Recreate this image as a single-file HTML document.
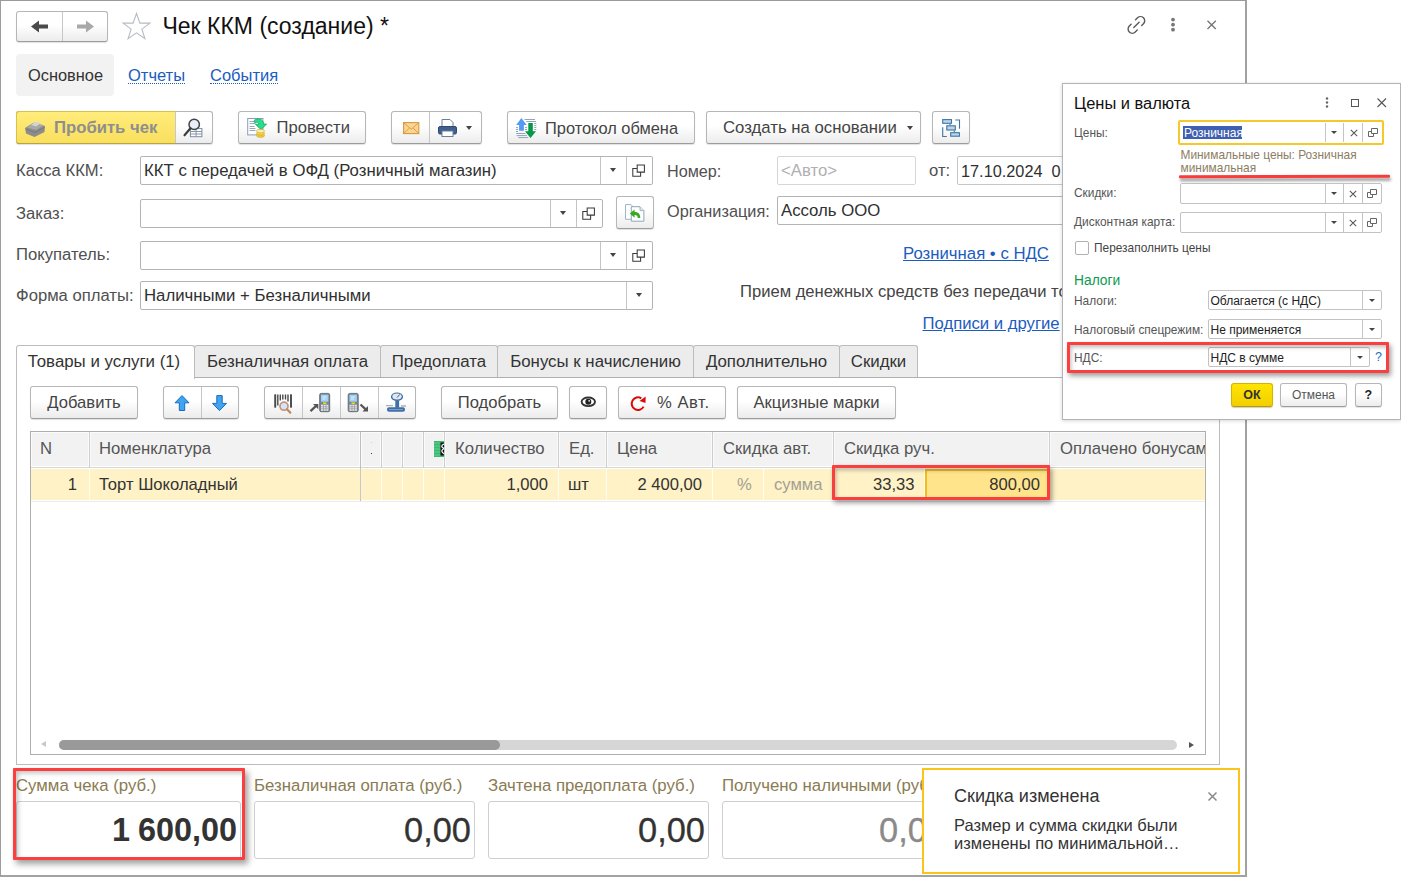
<!DOCTYPE html>
<html lang="ru"><head><meta charset="utf-8"><title>Чек ККМ (создание)</title>
<style>
*{box-sizing:border-box;margin:0;padding:0}
html,body{width:1401px;height:877px;overflow:hidden;background:#fff}
body{position:relative;font-family:"Liberation Sans",sans-serif;font-size:16.6px;color:#333;line-height:1}
.a{position:absolute;white-space:nowrap}
.win{left:0;top:0;width:1247px;height:877px;border-top:1px solid #9a9a9a;border-left:1px solid #9c9c9c;border-right:2px solid #a2a2a2;border-bottom:2px solid #a2a2a2}
.btn{border:1px solid #b6b6b6;border-bottom-color:#9c9c9c;border-radius:3px;background:linear-gradient(#fff,#fff 45%,#ececec);box-shadow:0 1px 1px rgba(0,0,0,.12);color:#444;text-align:center}
.btn .t{position:absolute;top:8px;left:0;right:0;text-align:center}
.sep{position:absolute;top:0;bottom:0;width:1px;background:#c6c6c6}
.lbl{color:#505050;font-size:16.65px}
.inp{border:1px solid #b4b4b4;border-radius:2px;background:#fff;height:29px}
.inp .v{position:absolute;left:3px;top:6px;color:#303030;font-size:16.75px}
.dd{position:absolute;top:0;bottom:0;width:1px;background:#c4c4c4}
.link{color:#1c5cbf;text-decoration:underline}
.tri{position:absolute;width:0;height:0;border-left:3.2px solid transparent;border-right:3.2px solid transparent;border-top:4px solid #444}
.tab{top:345px;height:32px;border:1px solid #bcbcbc;border-bottom:none;background:#ececec;border-radius:3px 3px 0 0;color:#333}
.tab span{position:absolute;top:8px;left:0;right:0;text-align:center;font-size:16.85px}
.th{position:absolute;top:0;height:35px;background:#f2f2f2;border-right:1px solid #cdcdcd;color:#555;box-shadow:inset 1px 0 0 #fbfbfb,inset -1px 0 0 #fbfbfb,inset 0 1px 0 #fbfbfb,inset 0 -1px 0 #fff;overflow:hidden}
.th span{position:absolute;left:10px;top:9.3px;font-size:16.7px}
.td{position:absolute;top:37px;height:31px;background:#fff2c6;border-right:1px solid #fffcf0;color:#333}
.td span{position:absolute;top:8px}
.tot{border:1px solid #cfcfcf;border-radius:3px;background:#fff;height:58px;top:801px;width:221px}
.tot span{position:absolute;right:3px;top:10.5px;font-size:34.4px;color:#333;-webkit-text-stroke:.3px #333}
.tl{top:778px;color:#8a7b52;font-size:16.8px}
.d{font-size:11.9px;color:#555}
.tri.s{border-left-width:3px;border-right-width:3px;border-top-width:3.5px}
.dinp{border:1px solid #c2c2c2;border-radius:2px;background:#fff;height:21px}
</style></head><body>
<div class="a win"></div>

<!-- nav -->
<div class="a btn" style="left:16px;top:11px;width:92px;height:31px"><div class="sep" style="left:45px"></div>
<svg class="a" style="left:0;top:0" width="92" height="30"><path d="M14 14.5 l8 -6 v4 h9 v4 h-9 v4z" fill="#4a4a4a"/><path d="M77 14.5 l-8 -6 v4 h-9 v4 h9 v4z" fill="#a8a8a8"/></svg></div>
<svg class="a" style="left:121px;top:11px" width="32" height="30"><path d="M15.5 2.5 l3.4 9.6 h10 l-8 6 3 9.6 -8.4 -5.9 -8.4 5.9 3 -9.6 -8 -6 h10z" fill="#fff" stroke="#b4bcc4" stroke-width="1.1"/></svg>
<div class="a" style="left:162.5px;top:14.5px;font-size:23px;color:#111">Чек ККМ (создание) *</div>
<!-- top right icons -->
<svg class="a" style="left:0;top:0" width="1247" height="50"><g transform="translate(1136.4 24.9) rotate(-45)" fill="none" stroke="#5a5a5a" stroke-width="1.4" stroke-linecap="round"><path d="M3 -4.2 H5.8 A4.2 4.2 0 0 1 5.8 4.2 H3.3"/><path d="M-3 4.2 H-5.8 A4.2 4.2 0 0 1 -5.8 -4.2 H-3.3"/><path d="M-3.7 0 H3.8"/></g></svg>
<svg class="a" style="left:1168px;top:15px" width="10" height="20"><circle cx="5" cy="4.6" r="1.9" fill="#777"/><circle cx="5" cy="9.7" r="1.9" fill="#777"/><circle cx="5" cy="14.7" r="1.9" fill="#777"/></svg>
<svg class="a" style="left:1206px;top:19px" width="12" height="12"><path d="M1.5 1.8 L9.8 10 M9.8 1.8 L1.5 10" stroke="#777" stroke-width="1.4"/></svg>

<!-- sections -->
<div class="a" style="left:16px;top:54px;width:98px;height:42px;background:#f2f2f2;border-radius:4px"></div>
<div class="a" style="left:28px;top:67px;font-size:16.4px;color:#333">Основное</div>
<div class="a" style="left:128px;top:67px;font-size:16.5px;color:#1c5cbf;height:17px;border-bottom:1px dotted #1c5cbf">Отчеты</div>
<div class="a" style="left:210px;top:67px;font-size:16.5px;color:#1c5cbf;height:17px;border-bottom:1px dotted #1c5cbf">События</div>

<!-- toolbar 1 -->
<div class="a btn" style="left:16px;top:111px;width:197px;height:33px;">
 <div class="a" style="left:-1px;top:-1px;width:160px;height:33px;background:linear-gradient(#ffec7a,#f9df5e);border:1px solid #d8c24a;border-bottom-color:#b9a540;border-right:none;border-radius:3px 0 0 3px"></div>
 <div class="sep" style="left:158px;background:#c8c8c8"></div>
 <svg class="a" style="left:0;top:0" width="36" height="31"><path d="M8 16 L16 11 L28 14 L27.5 20 L17.5 25 L9 21.5 Z" fill="#8c8c8c"/><path d="M10 15.5 L17.5 10.5 L27 13.2 L19 18 Z" fill="#a9a9a9"/><path d="M14 12.8 L18.5 9.8 L23.5 11.2 L19 14.4 Z" fill="#d4d4d4"/><path d="M9 17 L18 20.5 L27.5 15.5" fill="none" stroke="#7a7a7a" stroke-width="1"/></svg>
 <div class="a" style="left:37px;top:8px;font-weight:bold;color:#8e8e8e;font-size:16.7px">Пробить чек</div>
 <svg class="a" style="left:158px;top:0" width="40" height="31"><rect x="15.4" y="16.6" width="11.5" height="8.1" fill="#fff" stroke="#7d8da0" stroke-width="1"/><path d="M15.4 19.5 h11.5 M15.4 22 h11.5 M21.1 16.6 v8.1" stroke="#7d8da0" stroke-width=".9"/><circle cx="19.2" cy="12.4" r="5.2" fill="#e4ecf8" fill-opacity=".85" stroke="#444" stroke-width="1.5"/><path d="M15.5 16.3 L9.5 23.3" stroke="#3a3a3a" stroke-width="2.1" stroke-linecap="round"/></svg>
</div>
<div class="a btn" style="left:238px;top:111px;width:128px;height:33px">
 <svg class="a" style="left:0;top:0" width="40" height="31"><rect x="8.7" y="6.5" width="15.2" height="16.4" fill="#fff" stroke="#8a9db8"/><path d="M10.5 9.5h5M10.5 11.5h6M10.5 14.5h5M10.5 16.5h6M10.5 18.5h6" stroke="#9aa9bc" stroke-width="1"/><path d="M15.3 8.2 C18.5 5.8 24.3 6.5 24.6 12 L27.6 12 L22 17.7 L16.4 12.3 L20 12.3 C20 10.5 18 9.8 15.3 10.6 Z" fill="#25df8c" stroke="#17a862" stroke-width=".8"/><ellipse cx="21.5" cy="23.5" rx="4" ry="1.9" fill="#f0cf3a" stroke="#c9a020" stroke-width=".6"/><ellipse cx="21.5" cy="21.3" rx="4" ry="1.9" fill="#f5d94e" stroke="#c9a020" stroke-width=".6"/><ellipse cx="21.5" cy="19.1" rx="4" ry="1.9" fill="#fbeeb0" stroke="#c9a020" stroke-width=".6"/></svg>
 <div class="a" style="left:37.5px;top:8px">Провести</div>
</div>
<div class="a btn" style="left:391px;top:111px;width:91px;height:33px"><div class="sep" style="left:37px"></div>
 <svg class="a" style="left:10.5px;top:10px" width="18" height="14"><rect x=".6" y=".6" width="15.2" height="11" fill="#fad594" stroke="#d9983a" stroke-width="1.1"/><path d="M1 1 l7.2 6.2 7.2 -6.2 M1 11.2 l5.5 -5.2 M15.4 11.2 l-5.5 -5.2" fill="none" stroke="#d9983a" stroke-width=".9"/></svg>
 <svg class="a" style="left:45px;top:6px" width="22" height="20"><path d="M5 1.5 h8 l3 3 v5 h-11z" fill="#fff" stroke="#6a7f9a"/><rect x="1.5" y="8.5" width="18" height="7.5" rx="1.5" fill="#3f5f8c" stroke="#2f4a70"/><rect x="5" y="13" width="11" height="5.5" fill="#fff" stroke="#6a7f9a"/></svg>
 <div class="tri" style="left:74px;top:14px"></div>
</div>
<div class="a btn" style="left:507px;top:111px;width:188px;height:33px">
 <svg class="a" style="left:0;top:0" width="40" height="31"><path d="M16.5 7.5H27M18.3 9.5H28M8.2 21.5H17.3M8.6 23.6H18.9M10.2 25.6H20.3M8 15.6h2M8 17.5h2M8 19.5h2M17 15.6h2M17 17.5h2M26.3 11.5h2M26.3 13.5h2M26.3 15.5h2M26.3 17.5h2" stroke="#93a4b6" stroke-width="1"/><path d="M13.4 6 L18.7 13.1 H15.9 V18.8 H11.1 V13.1 H8.2 Z" fill="#5599f5"/><path d="M20.3 11 H24.8 V19.3 H28 L22.5 26.1 L17 19.3 H20.3 Z" fill="#049848"/></svg>
 <div class="a" style="left:37px;top:8px;font-size:16.4px">Протокол обмена</div>
</div>
<div class="a btn" style="left:706px;top:111px;width:215px;height:33px">
 <div class="a" style="left:16px;top:8px;font-size:16.75px">Создать на основании</div><div class="tri" style="left:200px;top:14px"></div>
</div>
<div class="a btn" style="left:932px;top:111px;width:38px;height:33px">
 <svg class="a" style="left:0;top:0" width="36" height="31"><g fill="#bcd3e8" stroke="#3d76a6" stroke-width="1.1"><rect x="9.7" y="7.6" width="8.8" height="3.7"/><rect x="13.8" y="13.8" width="8.5" height="4.2"/><rect x="17.7" y="20.7" width="8.7" height="3.5"/></g><path d="M22.3 8 H26.5 V16.7 M9.7 15.3 V24.5 H13.8 M17 11.7 V13.3 M21.3 18.5 V20.2" fill="none" stroke="#3d76a6" stroke-width="1.1"/></svg>
</div>

<!-- form left -->
<div class="a lbl" style="left:16px;top:163px">Касса ККМ:</div>
<div class="a inp" style="left:140px;top:156px;width:513px"><div class="v">ККТ с передачей в ОФД (Розничный магазин)</div><div class="dd" style="left:459px"></div><div class="dd" style="left:485px"></div><div class="tri" style="left:468.5px;top:10.8px"></div>
<svg class="a" style="left:490px;top:5px" width="16" height="16"><path d="M6.2 2.9 h7.2 v7.2 h-7.2z M6.2 6.5 h-4.4 v7.8 h7.8 v-4.2" fill="none" stroke="#3a3a3a" stroke-width="1.05"/></svg></div>

<div class="a lbl" style="left:16px;top:206px">Заказ:</div>
<div class="a inp" style="left:140px;top:199px;width:463px"><div class="dd" style="left:409px"></div><div class="dd" style="left:435px"></div><div class="tri" style="left:418.5px;top:10.8px"></div>
<svg class="a" style="left:440px;top:5px" width="16" height="16"><path d="M6.2 2.9 h7.2 v7.2 h-7.2z M6.2 6.5 h-4.4 v7.8 h7.8 v-4.2" fill="none" stroke="#3a3a3a" stroke-width="1.05"/></svg></div>
<div class="a btn" style="left:616px;top:196px;width:38px;height:33px">
 <svg class="a" style="left:0;top:0" width="36" height="31"><path d="M8.5 7.6 h5.5 l2.7 2.7 v12 h-8.2z" fill="#fff" stroke="#9fb4c4" stroke-width="1"/><path d="M14.3 9.7 h8.7 l3.9 3.9 v10.6 h-12.6z" fill="#fff" stroke="#8fa6b8" stroke-width="1"/><path d="M23 9.7 v3.9 h3.9" fill="#dfe8ee" stroke="#8fa6b8" stroke-width=".8"/><path d="M12.8 16.5 L17.6 12.4 V15 C21 14.8 23.3 16.8 23.3 21 H20.8 C20.8 18.6 19.6 17.8 17.6 17.9 V20.8 Z" fill="#3aa820"/></svg>
</div>

<div class="a lbl" style="left:16px;top:247px">Покупатель:</div>
<div class="a inp" style="left:140px;top:241px;width:513px;height:28.5px"><div class="dd" style="left:459px"></div><div class="dd" style="left:485px"></div><div class="tri" style="left:468.5px;top:10.8px"></div>
<svg class="a" style="left:490px;top:5px" width="16" height="16"><path d="M6.2 2.9 h7.2 v7.2 h-7.2z M6.2 6.5 h-4.4 v7.8 h7.8 v-4.2" fill="none" stroke="#3a3a3a" stroke-width="1.05"/></svg></div>

<div class="a lbl" style="left:16px;top:288px">Форма оплаты:</div>
<div class="a inp" style="left:140px;top:281px;width:513px"><div class="v">Наличными + Безналичными</div><div class="dd" style="left:485px"></div><div class="tri" style="left:494.5px;top:10.8px"></div></div>

<!-- form right -->
<div class="a lbl" style="left:667px;top:163px;font-size:16.2px">Номер:</div>
<div class="a inp" style="left:777px;top:156px;width:139px;border-color:#d6d6d6"><div class="v" style="color:#b0b0b0">&lt;Авто&gt;</div></div>
<div class="a lbl" style="left:929px;top:163px">от:</div>
<div class="a inp" style="left:957px;top:156px;width:200px;border-color:#c6c6c6"><div class="v" style="font-size:16.3px">17.10.2024&nbsp; 0</div></div>
<div class="a lbl" style="left:667px;top:203px;font-size:16.3px">Организация:</div>
<div class="a inp" style="left:777px;top:196px;width:400px;height:29px"><div class="v">Ассоль ООО</div></div>
<div class="a link" style="left:903px;top:246.4px;font-size:16.76px">Розничная • с НДС</div>
<div class="a" style="left:740px;top:284.4px;color:#444">Прием денежных средств без передачи то</div>
<div class="a link" style="left:922.5px;top:316.4px;font-size:16.7px">Подписи и другие</div>

<!-- tabs -->
<div class="a" style="left:16px;top:377px;width:1204px;height:388px;border:1px solid #bcbcbc;border-top-color:#b0b0b0"></div>
<div class="a tab" style="left:16px;width:179px;background:#fff;height:34px;border-radius:3px 3px 0 0"><span style="left:-3px">Товары и услуги (1)</span></div>
<div class="a tab" style="left:194px;width:187px"><span>Безналичная оплата</span></div>
<div class="a tab" style="left:380px;width:118px"><span>Предоплата</span></div>
<div class="a tab" style="left:497px;width:197px"><span>Бонусы к начислению</span></div>
<div class="a tab" style="left:693px;width:147px"><span>Дополнительно</span></div>
<div class="a tab" style="left:839px;width:79px"><span>Скидки</span></div>

<!-- toolbar 2 -->
<div class="a btn" style="left:30px;top:386px;width:108px;height:33px"><div class="t">Добавить</div></div>
<div class="a btn" style="left:163px;top:386px;width:76px;height:33px"><div class="sep" style="left:37px"></div>
 <svg class="a" style="left:0;top:0" width="38" height="31"><path d="M18 8.6 L25 15.8 H20.7 V23.5 H15.3 V15.8 H11 Z" fill="#40a4f1" stroke="#1a6cc0" stroke-width="1" stroke-linejoin="round"/></svg>
 <svg class="a" style="left:38px;top:0" width="38" height="31"><path d="M17.5 23.6 L24.5 16.4 H20.2 V8.6 H14.8 V16.4 H10.5 Z" fill="#40a4f1" stroke="#1a6cc0" stroke-width="1" stroke-linejoin="round"/></svg>
</div>
<div class="a btn" style="left:264px;top:386px;width:152px;height:33px"><div class="sep" style="left:37px"></div><div class="sep" style="left:75px"></div><div class="sep" style="left:113px"></div>
 <svg class="a" style="left:0;top:0" width="38" height="31"><path d="M10.3 7.5v13M12.8 7.5v11M15.3 7.5v6M17.8 7.5v5M20.5 7.5v5M23 7.5v7M26 7.5v13" stroke="#4a4a4a" stroke-width="1.4"/><path d="M10.3 7.5v13M26 7.5v13" stroke="#4a4a4a" stroke-width="1.8"/><circle cx="19" cy="19.2" r="4" fill="#d3e4fb" stroke="#c4937a" stroke-width="1.7"/><path d="M22 22.3 L25.3 25.6" stroke="#c08a5a" stroke-width="2.2" stroke-linecap="round"/></svg>
 <svg class="a" style="left:38px;top:0" width="38" height="31"><rect x="16.7" y="6.4" width="10" height="18.3" rx="1.5" fill="#7d8791" stroke="#5f6973" stroke-width=".9"/><rect x="18" y="7.7" width="7.4" height="7" fill="#9fd2f8"/><path d="M19.5 10 h4 M19.5 12 h3" stroke="#e8f4fe" stroke-width=".9"/><rect x="20" y="15.4" width="3.4" height="1.7" fill="#f3d416"/><rect x="18" y="17.8" width="7.4" height="6" fill="#e9e9e9"/><path d="M18 19.8 h7.4 M18 21.8 h7.4 M20.5 17.8 v6 M23 17.8 v6" stroke="#8a929a" stroke-width=".7"/><path d="M7.5 24.2 L14 18" stroke="#555" stroke-width="2.3"/><path d="M10 17 H15.3 V22.3 Z" fill="#555"/></svg>
 <svg class="a" style="left:76px;top:0" width="38" height="31"><rect x="7.2" y="6.4" width="10" height="18.3" rx="1.5" fill="#7d8791" stroke="#5f6973" stroke-width=".9"/><rect x="8.5" y="7.7" width="7.4" height="7" fill="#9fd2f8"/><path d="M10 10 h4 M10 12 h3" stroke="#e8f4fe" stroke-width=".9"/><rect x="10.5" y="15.4" width="3.4" height="1.7" fill="#f3d416"/><rect x="8.5" y="17.8" width="7.4" height="6" fill="#e9e9e9"/><path d="M8.5 19.8 h7.4 M8.5 21.8 h7.4 M11 17.8 v6 M13.5 17.8 v6" stroke="#8a929a" stroke-width=".7"/><path d="M19.5 17.5 L25.5 23.2" stroke="#555" stroke-width="2.3"/><path d="M27 19 V24.6 H21.4 Z" fill="#555"/></svg>
 <svg class="a" style="left:114px;top:0" width="38" height="31"><path d="M7 18.6 h7 M22 19 h5" stroke="#aab0b6" stroke-width="1.3"/><ellipse cx="18" cy="9.8" rx="6.1" ry="4.3" fill="#3f6fa5"/><ellipse cx="18" cy="9.6" rx="4.7" ry="3" fill="#dfe9f4"/><path d="M18 10.5 L20.8 7.4" stroke="#444" stroke-width=".9"/><rect x="16.3" y="13.8" width="3.8" height="7" fill="#3f6fa5"/><rect x="8" y="20.3" width="18" height="4.4" rx="2" fill="#3f6fa5"/><path d="M10 22.6 h14" stroke="#7fa3cc" stroke-width="1"/></svg>
</div>
<div class="a btn" style="left:441px;top:386px;width:117px;height:33px"><div class="t">Подобрать</div></div>
<div class="a btn" style="left:569px;top:386px;width:38px;height:33px">
 <svg class="a" style="left:0;top:0" width="36" height="31"><ellipse cx="18.3" cy="14.8" rx="6.7" ry="4.3" fill="#fff" stroke="#333" stroke-width="1.9"/><circle cx="18.3" cy="14.8" r="3" fill="#222"/><circle cx="19.2" cy="13.8" r=".9" fill="#eee"/></svg>
</div>
<div class="a btn" style="left:618px;top:386px;width:108px;height:33px">
 <svg class="a" style="left:0;top:0" width="38" height="31"><path d="M24.6 19.6 A6.3 6.3 0 1 1 22.3 11.3" fill="none" stroke="#dc0a0a" stroke-width="2"/><path d="M26.7 9.4 L26.5 15.9 L20.5 14.1 Z" fill="#dc0a0a"/></svg>
 <div class="a" style="left:38px;top:8px;letter-spacing:.55px">% Авт.</div>
</div>
<div class="a btn" style="left:737px;top:386px;width:159px;height:33px"><div class="t">Акцизные марки</div></div>

<!-- table -->
<div class="a" style="left:30px;top:431px;width:1176px;height:324px;border:1px solid #aeaeae;background:#fff;overflow:hidden">
 <div class="th" style="left:0;width:59px"><span style="left:9px">N</span></div>
 <div class="th" style="left:59px;width:271px"><span style="left:9px">Номенклатура</span></div>
 <div class="th" style="left:330px;width:21px"><div class="a" style="left:10px;top:21px;width:1px;height:1px;background:#333"></div><div class="a" style="left:10px;top:10px;width:1px;height:1px;background:#ccc"></div></div>
 <div class="th" style="left:351px;width:21px"></div>
 <div class="th" style="left:372px;width:21px"></div>
 <div class="th" style="left:393px;width:21px"><svg class="a" style="left:10px;top:9px" width="11" height="16"><rect x="0" y="0" width="11" height="16" fill="#3cb870"/><path d="M0 2h6M0 5h6M0 8h6M0 11h6M0 14h6" stroke="#5fcf8e" stroke-width="1"/><rect x="6.5" y="1.5" width="4.5" height="13" fill="#111"/><path d="M10.5 3 C7 4 7 6 10 7.5 C7 9 7 11 10.5 13" fill="none" stroke="#fff" stroke-width="1.3"/></svg></div>
 <div class="th" style="left:414px;width:114px"><span>Количество</span></div>
 <div class="th" style="left:528px;width:48px"><span>Ед.</span></div>
 <div class="th" style="left:576px;width:106px"><span>Цена</span></div>
 <div class="th" style="left:682px;width:121px"><span>Скидка авт.</span></div>
 <div class="th" style="left:803px;width:216px"><span>Скидка руч.</span></div>
 <div class="th" style="left:1019px;width:160px;border-right:none"><span>Оплачено бонусам</span></div>
 <div class="a" style="left:0;top:35px;width:1176px;height:1px;background:#d6d6d6"></div>
 <div class="a" style="left:329px;top:0;width:1px;height:70px;background:#bfbfbf"></div>

 <div class="td" style="left:0;width:59px"><span style="right:12px">1</span></div>
 <div class="td" style="left:59px;width:271px;border-right-color:#c8c8c8"><span style="left:9px">Торт Шоколадный</span></div>
 <div class="td" style="left:330px;width:21px"></div>
 <div class="td" style="left:351px;width:21px"></div>
 <div class="td" style="left:372px;width:21px"></div>
 <div class="td" style="left:393px;width:21px"></div>
 <div class="td" style="left:414px;width:114px"><span style="right:10px">1,000</span></div>
 <div class="td" style="left:528px;width:48px"><span style="left:9px">шт</span></div>
 <div class="td" style="left:576px;width:106px"><span style="right:10px">2 400,00</span></div>
 <div class="td" style="left:682px;width:51px"><span style="left:24px;color:#a39f94">%</span></div>
 <div class="td" style="left:733px;width:70px"><span style="left:10px;color:#a39f94">сумма</span></div>
 <div class="td" style="left:803px;width:91px"><span style="right:9.5px">33,33</span></div>
 <div class="td" style="left:894px;width:125px;background:#ffe48c;border:2px solid #efbb1f"><span style="right:8px;top:6px">800,00</span></div>
 <div class="td" style="left:1019px;width:160px;border-right:none"></div>
 <div class="a" style="left:0;top:69px;width:1176px;height:1px;background:#ececec"></div>

 <!-- scrollbar -->
 <div class="a" style="left:28px;top:308px;width:1118px;height:10px;border-radius:5px;background:#d6d6d6"></div>
 <div class="a" style="left:28px;top:308px;width:441px;height:10px;border-radius:5px;background:#999"></div>
 <div class="a" style="left:10px;top:309px;width:0;height:0;border-top:3.5px solid transparent;border-bottom:3.5px solid transparent;border-right:5px solid #c8c8c8"></div>
 <div class="a" style="left:1157.5px;top:310px;width:0;height:0;border-top:3.2px solid transparent;border-bottom:3.2px solid transparent;border-left:5px solid #555"></div>
</div>
<!-- red highlight on discount -->
<div class="a" style="left:832px;top:465px;width:218px;height:35px;border:3px solid #fb3e3e;border-radius:1px;box-shadow:2px 3px 5px rgba(0,0,0,.38),inset 2px 3px 4px -1px rgba(0,0,0,.28)"></div>

<!-- totals -->
<div class="a tl" style="left:16px">Сумма чека (руб.)</div>
<div class="a tot" style="left:16px;width:225px"><span style="font-weight:bold;font-size:32.4px;word-spacing:-1px;top:12px;-webkit-text-stroke:0">1 600,00</span></div>
<div class="a tl" style="left:254px">Безналичная оплата (руб.)</div>
<div class="a tot" style="left:254px"><span>0,00</span></div>
<div class="a tl" style="left:488px">Зачтена предоплата (руб.)</div>
<div class="a tot" style="left:488px"><span>0,00</span></div>
<div class="a tl" style="left:722px">Получено наличными (руб.)</div>
<div class="a tot" style="left:722px;width:228px"><span style="color:#8a8a8a;-webkit-text-stroke:.3px #8a8a8a">0,00</span></div>
<div class="a" style="left:13px;top:768px;width:232px;height:92px;border:3px solid #fb3e3e;border-radius:1px;box-shadow:3px 4px 6px rgba(0,0,0,.38),inset 3px 3px 5px -1px rgba(0,0,0,.25)"></div>

<!-- notification -->
<div class="a" style="left:922px;top:768px;width:318px;height:106px;border:2px solid #fbc41a;background:#fff">
 <div class="a" style="left:30px;top:17.2px;font-size:18.05px;color:#333">Скидка изменена</div>
 <svg class="a" style="left:283px;top:21px" width="12" height="12"><path d="M1.5 1.5 L9.5 9.5 M9.5 1.5 L1.5 9.5" stroke="#888" stroke-width="1.5"/></svg>
 <div class="a" style="left:30px;top:46px;font-size:16.5px;color:#333;line-height:18px;white-space:normal;width:260px">Размер и сумма скидки были<br>изменены по минимальной…</div>
</div>

<!-- dialog -->
<div class="a" style="left:1062px;top:83px;width:339px;height:337px;border:1px solid #b4b4b4;background:#fff;box-shadow:0 1px 4px rgba(0,0,0,.16)"></div>
<div class="a" style="left:1074px;top:95px;font-size:16.45px;color:#111">Цены и валюта</div>
<svg class="a" style="left:1324px;top:96px" width="6" height="13"><circle cx="3" cy="2.5" r="1.2" fill="#666"/><circle cx="3" cy="6.5" r="1.2" fill="#666"/><circle cx="3" cy="10.5" r="1.2" fill="#666"/></svg>
<div class="a" style="left:1351px;top:99px;width:8px;height:8px;border:1px solid #555"></div>
<svg class="a" style="left:1376px;top:97px" width="12" height="12"><path d="M1.5 1.5 L10 10 M10 1.5 L1.5 10" stroke="#555" stroke-width="1.1"/></svg>

<div class="a d" style="left:1074px;top:128px">Цены:</div>
<div class="a" style="left:1178px;top:120px;width:206px;height:25px;border:2px solid #f5c92a;border-radius:2px;background:#fff">
 <div class="a" style="left:3px;top:4px;width:59px;height:13px;background:#3f5fb0"></div>
 <div class="a" style="left:4px;top:5px;font-size:12px;color:#fff">Розничная</div>
 <div class="dd" style="left:145px;top:1px;bottom:1px"></div><div class="dd" style="left:163px;top:1px;bottom:1px"></div><div class="dd" style="left:182px;top:1px;bottom:1px"></div>
 <div class="tri s" style="left:151px;top:9px"></div>
 <svg class="a" style="left:169px;top:6px" width="10" height="10"><path d="M1.8 1.8 L8.2 8.2 M8.2 1.8 L1.8 8.2" stroke="#555" stroke-width="1.05"/></svg>
 <svg class="a" style="left:187px;top:5px" width="12" height="11"><path d="M4.5 1.5 h6 v5 h-6z M1.5 4.5 h3 M1.5 4.5 v5 h5 v-3" fill="none" stroke="#666" stroke-width="1"/></svg>
</div>
<div class="a" style="left:1180.5px;top:148.8px;font-size:11.9px;line-height:13px;color:#8b7d62;white-space:normal;width:200px">Минимальные цены: Розничная<br>минимальная</div>
<div class="a" style="left:1179px;top:174.6px;width:211px;height:2.8px;background:#fb3a3a;border-radius:1px;box-shadow:1px 3px 3px rgba(0,0,0,.4);transform:rotate(-.2deg)"></div>

<div class="a d" style="left:1074px;top:188px">Скидки:</div>
<div class="a dinp" style="left:1180px;top:183px;width:202px">
 <div class="dd" style="left:144px"></div><div class="dd" style="left:162px"></div><div class="dd" style="left:181px"></div>
 <div class="tri s" style="left:150px;top:8px"></div>
 <svg class="a" style="left:167px;top:5px" width="10" height="10"><path d="M1.8 1.8 L8.2 8.2 M8.2 1.8 L1.8 8.2" stroke="#555" stroke-width="1.05"/></svg>
 <svg class="a" style="left:185px;top:4px" width="12" height="11"><path d="M4.5 1.5 h6 v5 h-6z M1.5 4.5 h3 M1.5 4.5 v5 h5 v-3" fill="none" stroke="#666" stroke-width="1"/></svg>
</div>
<div class="a d" style="left:1074px;top:217px">Дисконтная карта:</div>
<div class="a dinp" style="left:1180px;top:212px;width:202px">
 <div class="dd" style="left:144px"></div><div class="dd" style="left:162px"></div><div class="dd" style="left:181px"></div>
 <div class="tri s" style="left:150px;top:8px"></div>
 <svg class="a" style="left:167px;top:5px" width="10" height="10"><path d="M1.8 1.8 L8.2 8.2 M8.2 1.8 L1.8 8.2" stroke="#555" stroke-width="1.05"/></svg>
 <svg class="a" style="left:185px;top:4px" width="12" height="11"><path d="M4.5 1.5 h6 v5 h-6z M1.5 4.5 h3 M1.5 4.5 v5 h5 v-3" fill="none" stroke="#666" stroke-width="1"/></svg>
</div>
<div class="a" style="left:1075px;top:241px;width:14px;height:14px;border:1px solid #b0b0b0;border-radius:2px;background:#fff"></div>
<div class="a d" style="left:1094px;top:243px;color:#444">Перезаполнить цены</div>

<div class="a" style="left:1074px;top:273.5px;font-size:13.8px;color:#0c9b4e">Налоги</div>
<div class="a d" style="left:1074px;top:296px">Налоги:</div>
<div class="a dinp" style="left:1208px;top:290px;width:174px;height:20px"><div class="a" style="left:1.5px;top:4px;font-size:12px;color:#222">Облагается (с НДС)</div><div class="dd" style="left:153px"></div><div class="tri s" style="left:160px;top:8px"></div></div>
<div class="a d" style="left:1074px;top:324.5px">Налоговый спецрежим:</div>
<div class="a dinp" style="left:1208px;top:319px;width:174px;height:20px"><div class="a" style="left:1.5px;top:4px;font-size:12px;color:#222">Не применяется</div><div class="dd" style="left:153px"></div><div class="tri s" style="left:160px;top:8px"></div></div>
<div class="a d" style="left:1074px;top:353px">НДС:</div>
<div class="a dinp" style="left:1208px;top:347px;width:162px;height:20px"><div class="a" style="left:1.5px;top:4px;font-size:12px;color:#222">НДС в сумме</div><div class="dd" style="left:141px"></div><div class="tri s" style="left:148px;top:8px"></div></div>
<div class="a" style="left:1375px;top:351px;font-size:12.5px;color:#1c6fc9">?</div>
<div class="a" style="left:1067px;top:342px;width:322px;height:31px;border:3px solid #fb3e3e;border-radius:1px;box-shadow:2px 3px 5px rgba(0,0,0,.38),inset 2px 3px 4px -1px rgba(0,0,0,.28)"></div>

<div class="a" style="left:1231px;top:383px;width:42px;height:24px;border:1px solid #d4b400;border-bottom-color:#b89c00;border-radius:3px;background:linear-gradient(#ffe400,#f2cf00);box-shadow:0 1px 1px rgba(0,0,0,.2)"><div class="a" style="left:0;right:0;top:5px;text-align:center;font-size:12.5px;font-weight:bold;color:#333">ОК</div></div>
<div class="a btn" style="left:1280px;top:383px;width:67px;height:24px"><div class="a" style="left:0;right:0;top:5px;text-align:center;font-size:12px;color:#555">Отмена</div></div>
<div class="a btn" style="left:1354.5px;top:383px;width:27.5px;height:24px"><div class="a" style="left:0;right:0;top:5px;text-align:center;font-size:12.5px;font-weight:bold;color:#222">?</div></div>
</body></html>
